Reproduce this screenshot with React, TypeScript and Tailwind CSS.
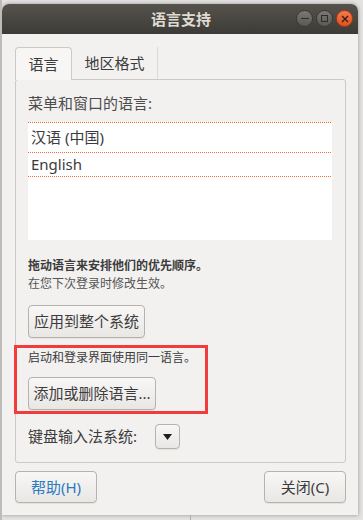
import React from "react";

const btn =
  "flex items-center justify-center rounded-[4px] border border-[#b6b2ac] bg-gradient-to-b from-[#f8f7f6] to-[#e9e7e4] shadow-[0_1px_0_rgba(0,0,0,0.06)]";

const dots =
  "h-px w-full shrink-0 bg-[linear-gradient(to_right,#f26d35_50%,transparent_50%)] bg-[length:2px_1px]";

export default function App() {
  const languages = ["汉语 (中国)", "English"];

  return (
    <div
      className="w-[363px] h-[520px] bg-[#e4e3e1] overflow-hidden relative"
      style={{ fontFamily: '"Noto Sans", "Noto Sans CJK SC", sans-serif' }}
    >
      {/* desktop behind the dialog */}
      <div className="absolute left-0 top-0 h-full w-[2px] bg-[#bdbcba]" />
      <div className="absolute left-[190px] top-[515px] h-[5px] w-px bg-[#b0afad]" />

      <div className="ml-[2px] mt-[4px] w-[356px] h-[511px] flex flex-col rounded-t-[7px] overflow-hidden bg-[#f2f1f0] shadow-[0_0_4px_rgba(0,0,0,0.35)]">
        {/* title bar */}
        <div className="relative h-[30px] shrink-0 flex items-center justify-center bg-gradient-to-b from-[#56534d] to-[#3d3b37]">
          <span className="text-[15px] font-bold text-[#dfdbd2] leading-none ml-[2px]">
            语言支持
          </span>
          <div className="absolute right-[5px] top-[6px] flex gap-[3px]">
            <div className="w-[17px] h-[17px] rounded-full bg-gradient-to-b from-[#7a7873] to-[#5b5954] border border-[#3a3935] flex items-center justify-center">
              <div className="w-[8px] h-[1.5px] bg-[#2f2e2b]" />
            </div>
            <div className="w-[17px] h-[17px] rounded-full bg-gradient-to-b from-[#7a7873] to-[#5b5954] border border-[#3a3935] flex items-center justify-center">
              <div className="w-[7px] h-[7px] border border-[#2f2e2b]" />
            </div>
            <div className="w-[17px] h-[17px] rounded-full bg-gradient-to-b from-[#f37a4c] to-[#e2501f] border border-[#a93a14] flex items-center justify-center">
              <svg width="8" height="8" viewBox="0 0 8 8">
                <path d="M1 1 L7 7 M7 1 L1 7" stroke="#3b1d10" strokeWidth="1.4" />
              </svg>
            </div>
          </div>
        </div>

        {/* body */}
        <div className="flex-1 flex flex-col px-[13px] pt-[12px]">
          {/* tabs */}
          <div className="flex h-[33px] items-end">
            <div className="relative z-10 h-[33px] w-[57px] flex items-center justify-center rounded-t-[4px] border border-b-0 border-[#cdc9c3] bg-[#f7f6f5] text-[15px] text-[#3c3c3c] -mb-px">
              语言
            </div>
            <div className="h-[32px] w-[86px] flex items-center justify-center border-r border-[#dcd8d3] text-[15px] text-[#3c3c3c]">
              地区格式
            </div>
          </div>

          {/* notebook page */}
          <div className="h-[384px] w-[331px] rounded-[3px] border border-[#cdc9c3] flex flex-col px-[12px]">
            <div className="h-[42px] flex items-center pt-[4px] text-[15px] text-[#4c4c4c]">
              菜单和窗口的语言:
            </div>
            <div className="h-[118px] w-[304px] bg-white flex flex-col">
              <div className={dots} />
              {languages.map((l, i) => (
                <React.Fragment key={l}>
                  <div
                    className={`flex items-center px-[3px] text-[15px] text-[#3c3c3c] ${
                      i === 0 ? "h-[29px]" : "h-[23px]"
                    }`}
                  >
                    {l}
                  </div>
                  <div className={dots} />
                </React.Fragment>
              ))}
            </div>

            <div className="mt-[18px] text-[12px] font-bold text-[#3c3c3c] leading-[16px]">
              拖动语言来安排他们的优先顺序。
            </div>
            <div className="mt-[2px] text-[12px] text-[#555] leading-[16px]">
              在您下次登录时修改生效。
            </div>

            <div className={`${btn} mt-[13px] h-[33px] w-[117px] text-[15px] text-[#3c3c3c]`}>
              应用到整个系统
            </div>

            {/* highlighted area */}
            <div className="-ml-[14px] mt-[7px] w-[194px] h-[69px] border-[3px] border-[#f23b3b] flex flex-col pl-[11px]">
              <div className="mt-[2px] text-[12px] text-[#3c3c3c] leading-[16px]">
                启动和登录界面使用同一语言。
              </div>
              <div className={`${btn} mt-[11px] h-[33px] w-[128px] text-[15px] text-[#3c3c3c]`}>
                添加或删除语言...
              </div>
            </div>

            <div className="mt-[10px] flex items-center">
              <span className="text-[15px] text-[#3c3c3c] w-[127px]">键盘输入法系统:</span>
              <div className={`${btn} h-[25px] w-[25px]`}>
                <svg width="9" height="6" viewBox="0 0 9 6">
                  <path d="M0 0 H9 L4.5 6 Z" fill="#1e1e1e" />
                </svg>
              </div>
            </div>
          </div>

          {/* bottom buttons */}
          <div className="mt-[8px] flex justify-between w-[331px]">
            <div className={`${btn} h-[32px] w-[82px] text-[15px] text-[#2a7bc1]`}>帮助(H)</div>
            <div className={`${btn} h-[32px] w-[82px] text-[15px] text-[#3c3c3c]`}>关闭(C)</div>
          </div>
        </div>
      </div>
    </div>
  );
}
